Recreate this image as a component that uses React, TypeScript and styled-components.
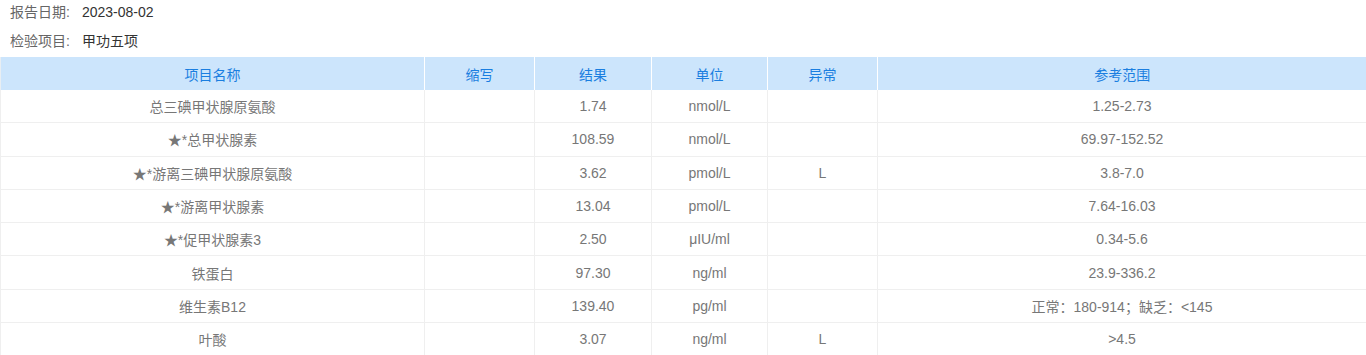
import React from "react";
import styled, { createGlobalStyle } from "styled-components";

const Global = createGlobalStyle`
  html, body { margin: 0; padding: 0; background: #fff; }
  body { font-family: "Liberation Sans", Arial, "Noto Sans CJK SC", sans-serif; }
`;

const Page = styled.div`
  width: 1366px;
`;

const Info = styled.div`
  display: flex;
  flex-direction: column;
  gap: 5px;
  padding: 0 10px;
`;

const InfoRow = styled.div`
  display: flex;
  align-items: center;
  height: 24px;
  font-size: 14px;
  line-height: 24px;
`;

const Label = styled.span`
  color: #666;
  margin-right: 12px;
`;

const Value = styled.span`
  color: #333;
`;

const Table = styled.table`
  margin-top: 4px;
  width: 1366px;
  border-collapse: collapse;
  table-layout: fixed;
  font-size: 14px;
`;

const HeadCell = styled.th`
  height: 33px;
  padding: 0;
  background: #cce5fc;
  color: #1a7ee0;
  font-weight: normal;
  text-align: center;
  border-left: 1px solid #fff;
  &:first-child { border-left: 1px solid #e8eef3; }
`;

const Cell = styled.td`
  height: 32.3px;
  padding: 0;
  color: #777;
  text-align: center;
  border: 1px solid #efefef;
  border-top: none;
`;

const cols = [424, 110, 117, 116, 110, 489];
const headers = ["项目名称", "缩写", "结果", "单位", "异常", "参考范围"];

const rows: string[][] = [
  ["总三碘甲状腺原氨酸", "", "1.74", "nmol/L", "", "1.25-2.73"],
  ["★*总甲状腺素", "", "108.59", "nmol/L", "", "69.97-152.52"],
  ["★*游离三碘甲状腺原氨酸", "", "3.62", "pmol/L", "L", "3.8-7.0"],
  ["★*游离甲状腺素", "", "13.04", "pmol/L", "", "7.64-16.03"],
  ["★*促甲状腺素3", "", "2.50", "μIU/ml", "", "0.34-5.6"],
  ["铁蛋白", "", "97.30", "ng/ml", "", "23.9-336.2"],
  ["维生素B12", "", "139.40", "pg/ml", "", "正常：180-914；缺乏：<145"],
  ["叶酸", "", "3.07", "ng/ml", "L", ">4.5"],
];

export default function App() {
  return (
    <Page>
      <Global />
      <Info>
        <InfoRow>
          <Label>报告日期:</Label>
          <Value>2023-08-02</Value>
        </InfoRow>
        <InfoRow>
          <Label>检验项目:</Label>
          <Value>甲功五项</Value>
        </InfoRow>
      </Info>
      <Table>
        <colgroup>
          {cols.map((w, i) => (
            <col key={i} style={{ width: w }} />
          ))}
        </colgroup>
        <thead>
          <tr>
            {headers.map((h) => (
              <HeadCell key={h}>{h}</HeadCell>
            ))}
          </tr>
        </thead>
        <tbody>
          {rows.map((r, i) => (
            <tr key={i}>
              {r.map((c, j) => (
                <Cell key={j}>{c}</Cell>
              ))}
            </tr>
          ))}
        </tbody>
      </Table>
    </Page>
  );
}
